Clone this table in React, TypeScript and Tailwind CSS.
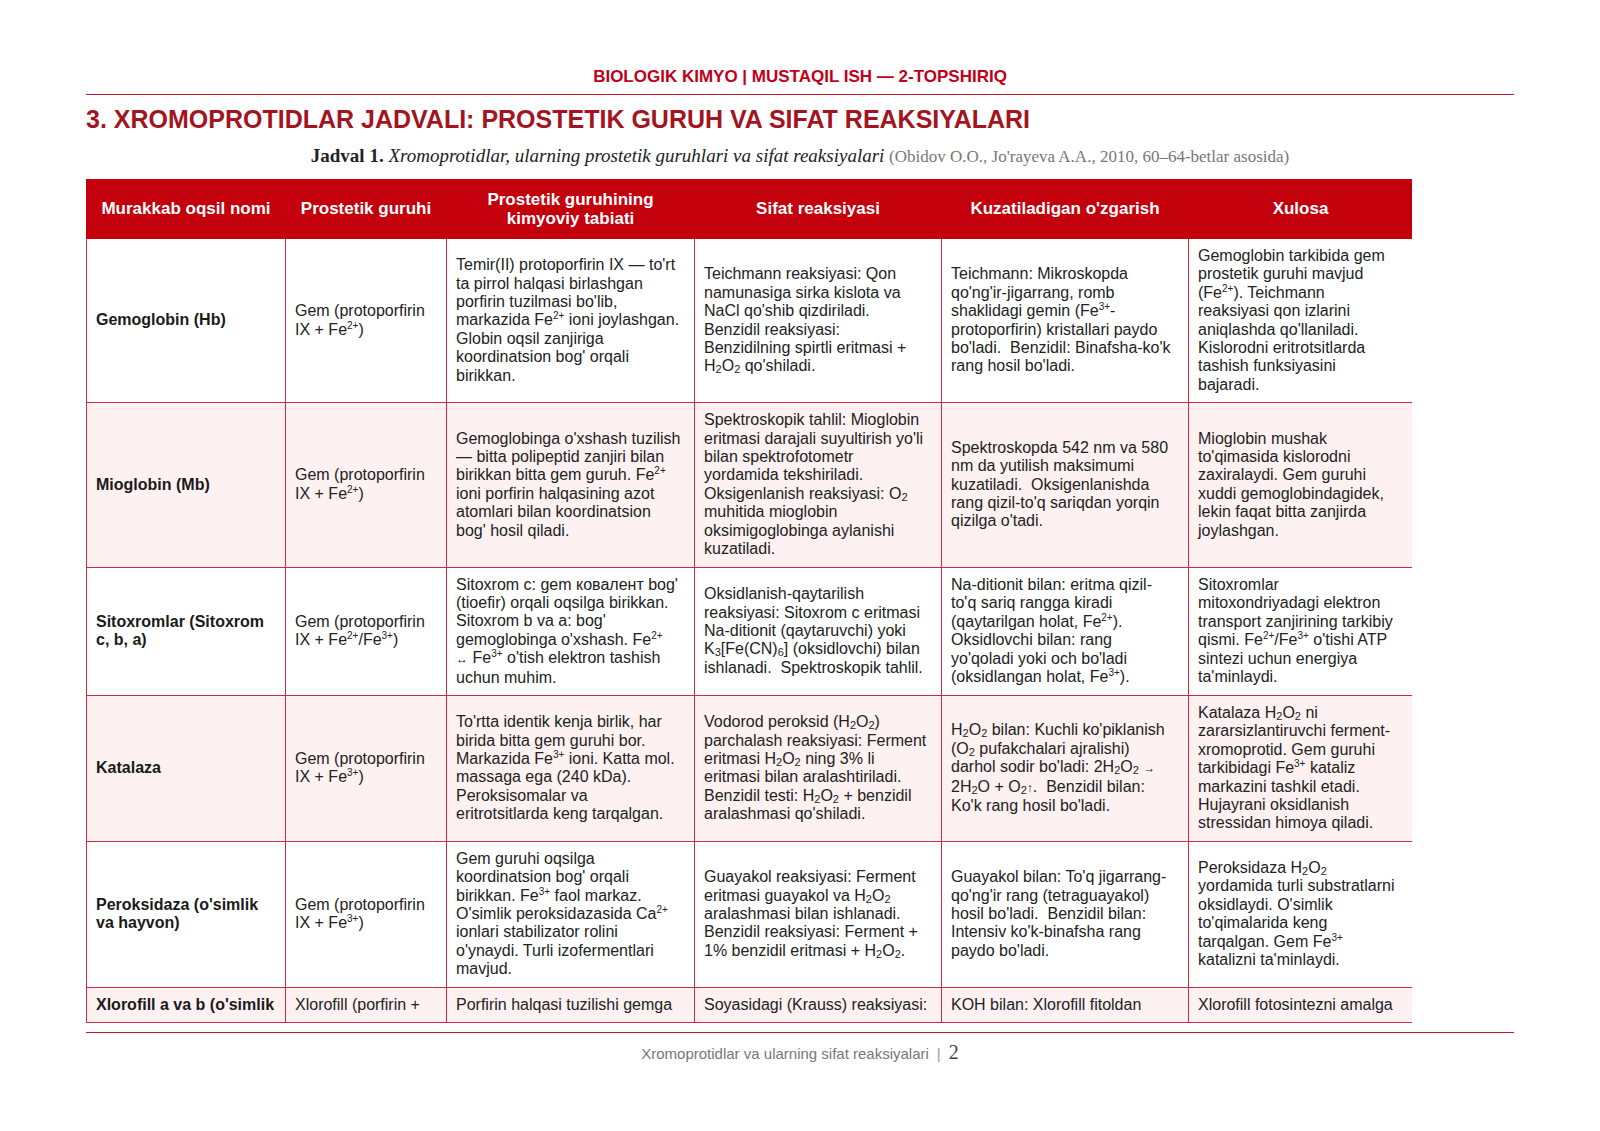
import React from "react";

const Sp = ({ c }: { c: string }) => <sup className="text-[10px] -top-[6px]">{c}</sup>;
const Sb = ({ c }: { c: string }) => <sub className="text-[11px] -bottom-[2px]">{c}</sub>;
const H2O2 = () => (
  <>
    H<Sb c="2" />O<Sb c="2" />
  </>
);
const Ar = ({ c }: { c: string }) => <span className="text-[12px]">{c}</span>;

type Row = { pink: boolean; clip?: boolean; cells: React.ReactNode[] };

const rows: Row[] = [
  {
    pink: false,
    cells: [
      "Gemoglobin (Hb)",
      <>Gem (protoporfirin IX + Fe<Sp c="2+" />)</>,
      <>Temir(II) protoporfirin IX — to'rt ta pirrol halqasi birlashgan porfirin tuzilmasi bo'lib, markazida Fe<Sp c="2+" /> ioni joylashgan. Globin oqsil zanjiriga koordinatsion bog' orqali birikkan.</>,
      <>Teichmann reaksiyasi: Qon namunasiga sirka kislota va NaCl qo'shib qizdiriladi. Benzidil reaksiyasi: Benzidilning spirtli eritmasi + <H2O2 /> qo'shiladi.</>,
      <>Teichmann: Mikroskopda qo'ng'ir-jigarrang, romb shaklidagi gemin (Fe<Sp c="3+" />-protoporfirin) kristallari paydo bo'ladi.{"\u00a0 "}Benzidil: Binafsha-ko'k rang hosil bo'ladi.</>,
      <>Gemoglobin tarkibida gem prostetik guruhi mavjud (Fe<Sp c="2+" />). Teichmann reaksiyasi qon izlarini aniqlashda qo'llaniladi. Kislorodni eritrotsitlarda tashish funksiyasini bajaradi.</>,
    ],
  },
  {
    pink: true,
    cells: [
      "Mioglobin (Mb)",
      <>Gem (protoporfirin IX + Fe<Sp c="2+" />)</>,
      <>Gemoglobinga o'xshash tuzilish — bitta polipeptid zanjiri bilan birikkan bitta gem guruh. Fe<Sp c="2+" /> ioni porfirin halqasining azot atomlari bilan koordinatsion bog' hosil qiladi.</>,
      <>Spektroskopik tahlil: Mioglobin eritmasi darajali suyultirish yo'li bilan spektrofotometr yordamida tekshiriladi. Oksigenlanish reaksiyasi: O<Sb c="2" /> muhitida mioglobin oksimigoglobinga aylanishi kuzatiladi.</>,
      <>Spektroskopda 542 nm va 580 nm da yutilish maksimumi kuzatiladi.{"\u00a0 "}Oksigenlanishda rang qizil-to'q sariqdan yorqin qizilga o'tadi.</>,
      <>Mioglobin mushak to'qimasida kislorodni zaxiralaydi. Gem guruhi xuddi gemoglobindagidek, lekin faqat bitta zanjirda joylashgan.</>,
    ],
  },
  {
    pink: false,
    cells: [
      "Sitoxromlar (Sitoxrom c, b, a)",
      <>Gem (protoporfirin IX + Fe<Sp c="2+" />/Fe<Sp c="3+" />)</>,
      <>Sitoxrom c: gem ковалент bog' (tioefir) orqali oqsilga birikkan. Sitoxrom b va a: bog' gemoglobinga o'xshash. Fe<Sp c="2+" /> <span className="whitespace-nowrap"><Ar c="↔" />{"\u00a0"}Fe<Sp c="3+" /></span> o'tish elektron tashish uchun muhim.</>,
      <>Oksidlanish-qaytarilish reaksiyasi: Sitoxrom c eritmasi Na-ditionit (qaytaruvchi) yoki K<Sb c="3" />[Fe(CN)<Sb c="6" />] (oksidlovchi) bilan ishlanadi.{"\u00a0 "}Spektroskopik tahlil.</>,
      <>Na-ditionit bilan: eritma qizil-to'q sariq rangga kiradi (qaytarilgan holat, Fe<Sp c="2+" />). Oksidlovchi bilan: rang yo'qoladi yoki och bo'ladi (oksidlangan holat, Fe<Sp c="3+" />).</>,
      <>Sitoxromlar mitoxondriyadagi elektron transport zanjirining tarkibiy qismi. Fe<Sp c="2+" />/Fe<Sp c="3+" /> o'tishi ATP sintezi uchun energiya ta'minlaydi.</>,
    ],
  },
  {
    pink: true,
    cells: [
      "Katalaza",
      <>Gem (protoporfirin IX + Fe<Sp c="3+" />)</>,
      <>To'rtta identik kenja birlik, har birida bitta gem guruhi bor. Markazida Fe<Sp c="3+" /> ioni. Katta mol. massaga ega (240 kDa). Peroksisomalar va eritrotsitlarda keng tarqalgan.</>,
      <>Vodorod peroksid (<H2O2 />) parchalash reaksiyasi: Ferment eritmasi <H2O2 /> ning 3% li eritmasi bilan aralashtiriladi. Benzidil testi: <H2O2 /> + benzidil aralashmasi qo'shiladi.</>,
      <><H2O2 /> bilan: Kuchli ko'piklanish (O<Sb c="2" /> pufakchalari ajralishi) darhol sodir bo'ladi: 2<H2O2 /> <Ar c="→" /> 2H<Sb c="2" />O + O<Sb c="2" /><Ar c="↑" />.{"\u00a0 "}Benzidil bilan: Ko'k rang hosil bo'ladi.</>,
      <>Katalaza <H2O2 /> ni zararsizlantiruvchi ferment-xromoprotid. Gem guruhi tarkibidagi Fe<Sp c="3+" /> kataliz markazini tashkil etadi. Hujayrani oksidlanish stressidan himoya qiladi.</>,
    ],
  },
  {
    pink: false,
    cells: [
      "Peroksidaza (o'simlik va hayvon)",
      <>Gem (protoporfirin IX + Fe<Sp c="3+" />)</>,
      <>Gem guruhi oqsilga koordinatsion bog' orqali birikkan. Fe<Sp c="3+" /> faol markaz. O'simlik peroksidazasida Ca<Sp c="2+" /> ionlari stabilizator rolini o'ynaydi. Turli izofermentlari mavjud.</>,
      <>Guayakol reaksiyasi: Ferment eritmasi guayakol va <H2O2 /> aralashmasi bilan ishlanadi. Benzidil reaksiyasi: Ferment + 1% benzidil eritmasi + <H2O2 />.</>,
      <>Guayakol bilan: To'q jigarrang-qo'ng'ir rang (tetraguayakol) hosil bo'ladi.{"\u00a0 "}Benzidil bilan: Intensiv ko'k-binafsha rang paydo bo'ladi.</>,
      <>Peroksidaza <H2O2 /> yordamida turli substratlarni oksidlaydi. O'simlik to'qimalarida keng tarqalgan. Gem Fe<Sp c="3+" /> katalizni ta'minlaydi.</>,
    ],
  },
  {
    pink: true,
    clip: true,
    cells: [
      "Xlorofill a va b (o'simlik",
      "Xlorofill (porfirin +",
      "Porfirin halqasi tuzilishi gemga",
      "Soyasidagi (Krauss) reaksiyasi:",
      "KOH bilan: Xlorofill fitoldan",
      "Xlorofill fotosintezni amalga",
    ],
  },
];

const headers: React.ReactNode[] = [
  "Murakkab oqsil nomi",
  "Prostetik guruhi",
  <>Prostetik guruhining<br />kimyoviy tabiati</>,
  "Sifat reaksiyasi",
  "Kuzatiladigan o'zgarish",
  "Xulosa",
];

const widths = [199, 161, 248, 247, 247, 224];

export default function App() {
  return (
    <div
      className="w-[1600px] h-[1131px] bg-white px-[86px] pt-[67px] text-[#222]"
      style={{ fontFamily: '"Liberation Sans", Arial, sans-serif' }}
    >
      <div className="border-b border-[#c0142a] pb-[8px] text-center text-[17px] leading-[19px] font-bold text-[#c0001a]">
        BIOLOGIK KIMYO | MUSTAQIL ISH — 2-TOPSHIRIQ
      </div>
      <h1 className="mt-[10px] text-[25px] leading-[29px] font-bold text-[#a3141f]">
        3. XROMOPROTIDLAR JADVALI: PROSTETIK GURUH VA SIFAT REAKSIYALARI
      </h1>
      <div
        className="mt-[11px] text-center text-[19px] leading-[22px] text-[#222]"
        style={{ fontFamily: '"Liberation Serif", "Times New Roman", serif' }}
      >
        <span className="font-bold">Jadval 1.</span>{" "}
        <span className="italic">Xromoprotidlar, ularning prostetik guruhlari va sifat reaksiyalari</span>{" "}
        <span className="text-[17px] text-[#777]">(Obidov O.O., Jo'rayeva A.A., 2010, 60–64-betlar asosida)</span>
      </div>
      <div className="mt-[11px] w-[1326px] overflow-hidden">
        <table className="w-[1326px] table-fixed border-collapse text-[16px] leading-[18.4px]">
          <colgroup>
            {widths.map((w, i) => (
              <col key={i} style={{ width: w }} />
            ))}
          </colgroup>
          <thead>
            <tr className="bg-[#c4000d]">
              {headers.map((h, i) => (
                <th
                  key={i}
                  className="border border-[#c4000d] px-[9px] py-[9.5px] text-center align-middle text-[17px] leading-[19.5px] font-bold text-white"
                >
                  {h}
                </th>
              ))}
            </tr>
          </thead>
          <tbody>
            {rows.map((r, ri) => (
              <tr key={ri} className={r.pink ? "bg-[#fdf1f1]" : "bg-white"}>
                {r.cells.map((c, ci) => (
                  <td
                    key={ci}
                    className={
                      "border border-[#d02a44] pl-[9px] pr-[12px] py-[8px] align-middle text-left " +
                      (r.clip ? "whitespace-nowrap overflow-hidden " : "") +
                      (ci === 0 ? "font-bold text-[#1a1a1a]" : "text-[#222]")
                    }
                  >
                    {c}
                  </td>
                ))}
              </tr>
            ))}
          </tbody>
        </table>
      </div>
      <div className="mt-[9px] border-t border-[#c0142a] pt-[7px] text-center text-[15px] leading-[24px] text-[#777]">
        Xromoprotidlar va ularning sifat reaksiyalari
        <span className="mx-[8px] text-[#999]">|</span>
        <span
          className="text-[20px] text-[#444]"
          style={{ fontFamily: '"Liberation Serif", "Times New Roman", serif' }}
        >
          2
        </span>
      </div>
    </div>
  );
}
